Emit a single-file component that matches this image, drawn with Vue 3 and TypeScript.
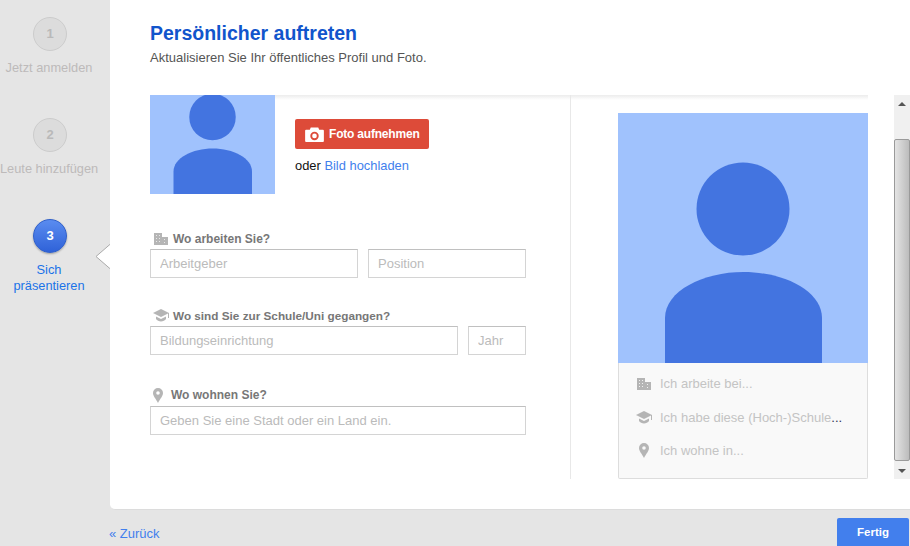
<script setup lang="ts">
const steps = [
  { num: 1, lines: ['Jetzt anmelden'], active: false },
  { num: 2, lines: ['Leute hinzufügen'], active: false },
  { num: 3, lines: ['Sich', 'präsentieren'], active: true },
]
</script>

<template>
  <div class="page">
    <div class="top">
      <aside class="steps">
        <div v-for="s in steps" :key="s.num" class="step" :class="{ active: s.active }">
          <div class="bubble">{{ s.num }}</div>
          <div v-for="l in s.lines" :key="l" class="step-label">{{ l }}</div>
        </div>
        <svg class="pointer" width="16" height="28" viewBox="0 0 16 28">
          <path d="M16 0.500L1 13.500L16 26.500" fill="#fff" stroke="#aaa" />
        </svg>
      </aside>

      <main class="card">
        <header class="head">
          <h1>Persönlicher auftreten</h1>
          <p>Aktualisieren Sie Ihr öffentliches Profil und Foto.</p>
        </header>

        <div class="body">
          <div class="shade"></div>
          <section class="form">
            <div class="photo-row">
              <svg class="avatar" width="125" height="99" viewBox="0 52 250 198">
                <rect y="52" width="250" height="198" fill="#a0c2fd" />
                <circle cx="125" cy="96" r="46.500" fill="#4374e0" />
                <path d="M47 250V205C47 178 85 159 125.500 159S204 178 204 205V250Z" fill="#4374e0" />
              </svg>
              <div class="photo-actions">
                <button class="photo-btn">
                  <svg width="19" height="15" viewBox="0 0 20 16">
                    <path fill-rule="evenodd" fill="#fff" d="M1 3h4l1-2.500h8L15 3h4a1 1 0 0 1 1 1v11a1 1 0 0 1-1 1H1a1 1 0 0 1-1-1V4a1 1 0 0 1 1-1zM10 5a4.500 4.500 0 1 0 0 9 4.500 4.500 0 0 0 0-9zM10 7a2.500 2.500 0 1 1 0 5 2.500 2.500 0 0 1 0-5z" />
                  </svg>
                  Foto aufnehmen
                </button>
                <div class="upload">oder <a>Bild hochladen</a></div>
              </div>
            </div>

            <div class="group first">
              <label>
                <span class="ico">
                  <svg width="14" height="12" viewBox="0 0 14 12"><path fill="#b5b5b5" d="M0 0h8v4h6v8H0z" /><path fill="#e8e8e8" d="M2 2h1v1H2zM5 2h1v1H5zM2 5h1v1H2zM5 5h1v1H5zM2 8h1v1H2zM5 8h1v1H5zM10 6h1v1h-1zM10 9h1v1h-1z" /></svg>
                </span>
                Wo arbeiten Sie?
              </label>
              <div class="inputs">
                <input class="grow" placeholder="Arbeitgeber" />
                <input class="w-pos" placeholder="Position" />
              </div>
            </div>

            <div class="group second">
              <label>
                <span class="ico">
                  <svg width="17" height="13" viewBox="0 0 17 13"><path fill="#b5b5b5" d="M8 0L0 4l8 4 7-3.500V9h1V4z" /><path fill="#b5b5b5" d="M3 7.500V10c1 1.500 3 2.500 5 2.500s4-1 5-2.500V7.500L8 10z" /></svg>
                </span>
                Wo sind Sie zur Schule/Uni gegangen?
              </label>
              <div class="inputs">
                <input class="grow" placeholder="Bildungseinrichtung" />
                <input class="w-year" placeholder="Jahr" />
              </div>
            </div>

            <div class="group third">
              <label>
                <span class="ico">
                  <svg width="10" height="15" viewBox="0 0 10 15"><path fill-rule="evenodd" fill="#b5b5b5" d="M5 0a5 5 0 0 1 5 5c0 3-3 6-5 10C3 11 0 8 0 5a5 5 0 0 1 5-5zM5 3.200a1.800 1.800 0 1 0 0 3.600 1.800 1.800 0 0 0 0-3.600z" /></svg>
                </span>
                Wo wohnen Sie?
              </label>
              <div class="inputs">
                <input class="grow" placeholder="Geben Sie eine Stadt oder ein Land ein." />
              </div>
            </div>
          </section>

          <section class="preview-col">
            <div class="preview">
              <svg class="big" width="250" height="250" viewBox="0 0 250 250">
                <rect width="250" height="250" fill="#a0c2fd" />
                <circle cx="125" cy="96" r="46.500" fill="#4374e0" />
                <path d="M47 250V205C47 178 85 159 125.500 159S204 178 204 205V250Z" fill="#4374e0" />
              </svg>
              <ul>
                <li>
                  <span class="pico"><svg width="14" height="12" viewBox="0 0 14 12"><path fill="#b5b5b5" d="M0 0h8v4h6v8H0z" /><path fill="#f0f0f0" d="M2 2h1v1H2zM5 2h1v1H5zM2 5h1v1H2zM5 5h1v1H5zM2 8h1v1H2zM5 8h1v1H5zM10 6h1v1h-1zM10 9h1v1h-1z" /></svg></span>
                  Ich arbeite bei...
                </li>
                <li>
                  <span class="pico"><svg width="17" height="13" viewBox="0 0 17 13"><path fill="#b5b5b5" d="M8 0L0 4l8 4 7-3.500V9h1V4z" /><path fill="#b5b5b5" d="M3 7.500V10c1 1.500 3 2.500 5 2.500s4-1 5-2.500V7.500L8 10z" /></svg></span>
                  Ich habe diese (Hoch-)Schule<span class="dots">...</span>
                </li>
                <li>
                  <span class="pico"><svg width="10" height="15" viewBox="0 0 10 15"><path fill-rule="evenodd" fill="#b5b5b5" d="M5 0a5 5 0 0 1 5 5c0 3-3 6-5 10C3 11 0 8 0 5a5 5 0 0 1 5-5zM5 3.200a1.800 1.800 0 1 0 0 3.600 1.800 1.800 0 0 0 0-3.600z" /></svg></span>
                  Ich wohne in...
                </li>
              </ul>
            </div>
          </section>

          <div class="scrollbar">
            <div class="arrow-box"><i class="up"></i></div>
            <div class="track"><div class="thumb"></div></div>
            <div class="arrow-box low"><i class="down"></i></div>
          </div>
        </div>
      </main>
    </div>

    <footer class="foot">
      <a class="back">« Zurück</a>
      <button class="done">Fertig</button>
    </footer>
  </div>
</template>

<style>
body {
  background: #e5e5e5;
}
</style>

<style scoped>
.page {
  width: 910px;
  height: 546px;
  overflow: hidden;
  font-family: "Liberation Sans", Arial, sans-serif;
  font-size: 12px;
  display: flex;
  flex-direction: column;
}

.top {
  display: flex;
  height: 510px;
  flex: none;
}

.steps {
  width: 110px;
  flex: none;
  position: relative;
  padding-top: 17px;
  box-sizing: border-box;
}

.step {
  height: 101px;
  text-align: center;
  color: #bdbaba;
  line-height: 16px;
  font-size: 12.800px;
  white-space: nowrap;
  width: 98px;
}

.bubble {
  width: 32px;
  height: 32px;
  margin: 0 0 9px 33px;
  border-radius: 50%;
  border: 1px solid #cccccc;
  background: #dcdcdc;
  color: #b9b9b9;
  font-weight: bold;
  font-size: 13px;
  line-height: 32px;
}

.step.active {
  color: #1a73e8;
}

.step.active .bubble {
  background: linear-gradient(#5a8cf0, #2f62d8);
  border-color: #2f5fc8;
  color: #fff;
  box-shadow: 0 1px 2px rgba(0, 0, 0, 0.3);
}

.pointer {
  position: absolute;
  left: 95px;
  top: 243px;
  display: block;
}

.card {
  flex: 1;
  background: #fff;
  border-bottom: 1px solid #dcdcdc;
  border-bottom-left-radius: 5px;
  display: flex;
  flex-direction: column;
  position: relative;
}

.head {
  height: 95px;
  flex: none;
  box-sizing: border-box;
  padding: 22px 0 0 40px;
}

h1 {
  margin: 0;
  font-size: 19.500px;
  line-height: 23px;
  font-weight: bold;
  color: #1155cc;
}

.head p {
  margin: 5px 0 0;
  font-size: 13px;
  line-height: 15px;
  color: #555;
}

.body {
  display: flex;
  height: 384px;
  position: relative;
}

.shade {
  position: absolute;
  left: 40px;
  right: 42px;
  top: 0;
  height: 5px;
  background: linear-gradient(#ececec, #fff);
}

.form {
  width: 461px;
  flex: none;
  box-sizing: border-box;
  padding-left: 40px;
  border-right: 1px solid #e8e8e8;
  position: relative;
}

.photo-row {
  display: flex;
  height: 99px;
  gap: 20px;
}

.avatar {
  display: block;
}

.photo-actions {
  padding-top: 24px;
}

.photo-btn {
  height: 30px;
  width: 134px;
  border: none;
  border-radius: 2px;
  background: #dd4b39;
  color: #fff;
  font: bold 12px "Liberation Sans", Arial, sans-serif;
  letter-spacing: -0.2px;
  display: flex;
  align-items: center;
  gap: 5px;
  padding: 0 0 0 10px;
}

.upload {
  margin-top: 9px;
  font-size: 12.900px;
  line-height: 15px;
  color: #111;
}

.upload a {
  color: #427fed;
}

.group label {
  display: flex;
  align-items: center;
  height: 16px;
  font-weight: bold;
  font-size: 12px;
  color: #777;
  margin-bottom: 3px;
}

.group.first {
  margin-top: 37px;
}

.group.first label {
  margin-bottom: 2px;
}

.group.second {
  margin-top: 29px;
}

.group.second label {
  font-size: 11.750px;
}

.group.third {
  margin-top: 32px;
}

.ico {
  width: 23px;
  flex: none;
  display: flex;
  box-sizing: border-box;
  padding-left: 4px;
}

.second .ico {
  padding-left: 3px;
}

.third .ico {
  width: 21px;
  padding-left: 3px;
}

.inputs {
  display: flex;
  gap: 10px;
  width: 376px;
}

input {
  height: 29px;
  box-sizing: border-box;
  border: 1px solid #d4d4d4;
  border-top-color: #c0c0c0;
  padding: 0 9px;
  font: 13px "Liberation Sans", Arial, sans-serif;
  min-width: 0;
  outline: none;
}

input::placeholder {
  color: #bbb;
}

.grow {
  flex: 1;
}

.w-pos {
  width: 158px;
}

.w-year {
  width: 58px;
}

.preview-col {
  width: 323px;
  flex: none;
  padding: 18px 0 0 47px;
  box-sizing: border-box;
}

.preview {
  width: 250px;
  height: 366px;
  border-radius: 2px;
  box-sizing: border-box;
}

.big {
  display: block;
}

.preview ul {
  list-style: none;
  margin: 0;
  padding: 4px 0 0;
  height: 116px;
  box-sizing: border-box;
  background: #f9f9f9;
  border: 1px solid #ddd;
  border-top: none;
  border-radius: 0 0 2px 2px;
  color: #c4c4c4;
  font-size: 13px;
}

.preview li {
  height: 33.500px;
  display: flex;
  align-items: center;
  white-space: nowrap;
}

.pico {
  width: 41px;
  flex: none;
  display: flex;
  justify-content: center;
  padding-left: 9px;
  box-sizing: border-box;
}

.dots {
  color: #335;
}

.scrollbar {
  width: 16px;
  flex: none;
  background: #f0f0f0;
  display: flex;
  flex-direction: column;
}

.arrow-box {
  height: 17px;
  display: flex;
  align-items: center;
  justify-content: center;
  flex: none;
}

.track {
  flex: 1;
  padding: 27px 0 0;
}

.thumb {
  height: 322px;
  box-sizing: border-box;
  border: 1px solid #9a9a9a;
  border-radius: 2px;
  background: linear-gradient(90deg, #e4e4e4, #d0d0d0 50%, #bcbcbc);
}

.up,
.down {
  width: 0;
  height: 0;
  border-left: 4px solid transparent;
  border-right: 4px solid transparent;
}

.up {
  border-bottom: 4px solid #555;
}

.down {
  border-top: 4px solid #555;
}

.foot {
  flex: 1;
  display: flex;
  justify-content: space-between;
  align-items: flex-end;
  padding: 0 1px 0 109px;
}

.back {
  color: #427fed;
  font-size: 13px;
  line-height: 15px;
  margin-bottom: 5px;
}

.done {
  width: 72px;
  height: 28px;
  border: none;
  border-radius: 2px 2px 0 0;
  background: #427fed;
  color: #fff;
  font: bold 11.500px "Liberation Sans", Arial, sans-serif;
}
</style>
